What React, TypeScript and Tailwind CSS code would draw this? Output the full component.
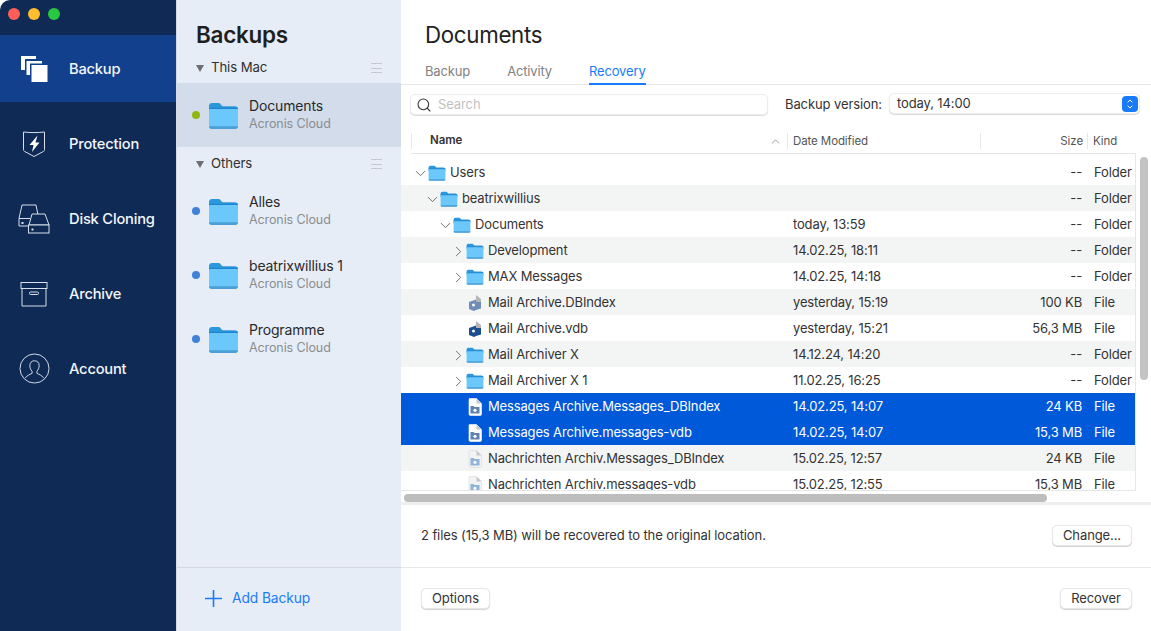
import { ChevronDown, ChevronRight, ChevronUp, Search } from 'lucide-react'

const font = { fontFamily: 'Inter, "Liberation Sans", sans-serif' }

function FolderIcon({ className = 'w-[18px] h-[16px]' }: { className?: string }) {
  return (
    <svg viewBox="0 0 30 26" className={className}>
      <path d="M1 4a3 3 0 0 1 3-3h7l3 3h12a3 3 0 0 1 3 3v3H1z" fill="#2c97dd" />
      <path d="M1 6.500h28v16.500a2.500 2.500 0 0 1-2.500 2.500h-23A2.500 2.500 0 0 1 1 23z" fill="#6cc8fb" />
      <rect x="1" y="5.500" width="28" height="1.200" fill="#1f86cf" />
      <path d="M1 23.500h28a2.500 2.500 0 0 1-2.500 2.500h-23A2.500 2.500 0 0 1 1 23.500z" fill="#4a9fd6" />
    </svg>
  )
}

function DbIcon({ dark }: { dark: boolean }) {
  const c = dark ? '#1c4f8f' : '#6f8db5'
  return (
    <svg viewBox="0 0 16 18" className="w-4 h-[18px]">
      <path d="M9 1l5 4v3H9z" fill="#b5b5b8" />
      <path d="M2 8l7-2.500V16l-2 1-5-2z" fill={c} />
      <path d="M9 8h5v6.500L9 16z" fill={c} />
      <circle cx="6.500" cy="11" r="1.500" fill="#fff" />
    </svg>
  )
}

function MsgIcon({ faded, selected }: { faded?: boolean; selected?: boolean }) {
  return (
    <svg viewBox="0 0 16 18" className="w-4 h-[18px]">
      <path d="M2.500 0.500h7l5 5v10.500a1.500 1.500 0 0 1-1.500 1.500h-9A1.500 1.500 0 0 1 2 16V1z" fill={faded ? '#f1f3f5' : '#fff'} stroke={selected ? '#fff' : '#d5d7da'} strokeWidth="0.600" />
      <path d="M9.500 0.500v5h5z" fill="#c4c7cc" />
      <path d="M3.500 8h3l1 1h5v6.500h-9z" fill={faded ? '#8fb2d9' : '#5f83ad'} />
      <circle cx="8" cy="12.300" r="1.600" fill="#fff" />
    </svg>
  )
}

function BackupIcon() {
  return (
    <svg viewBox="0 0 28 28" className="w-7 h-7">
      <path d="M1 1h15v3H5v11H1z" fill="#fff" />
      <path d="M6.500 6H22v2.500H10V20H6.500z" fill="#fff" />
      <rect x="11.500" y="10" width="16" height="17" fill="#fff" />
    </svg>
  )
}

function ProtectionIcon() {
  return (
    <svg viewBox="0 0 24 28" className="w-6 h-7" fill="none">
      <path d="M1.500 2c7 .8 14 .8 21 0v17.500c0 1-.3 1.600-1.200 2L12 26.500l-9.300-5c-.9-.4-1.200-1-1.200-2z" stroke="#d8dfea" strokeWidth="1" />
      <path d="M15.500 5.500L7.500 15h4l-1.500 7 7.500-9.500h-4z" fill="#fff" />
    </svg>
  )
}

function CloningIcon() {
  return (
    <svg viewBox="0 0 32 30" className="w-8 h-[30px]" fill="none" stroke="#d8dfea" strokeWidth="1">
      <path d="M4 1h14l2 10M1 14.500L4 1M1 14.500V22h10M1 14.500h11" />
      <path d="M14 10h13l4 11H11z" fill="#0e2a55" />
      <rect x="10.500" y="21" width="20.500" height="8" fill="#0e2a55" />
      <rect x="3.500" y="18" width="2" height="2" fill="#d8dfea" stroke="none" />
      <rect x="13.500" y="24.500" width="2" height="2" fill="#d8dfea" stroke="none" />
    </svg>
  )
}

function ArchiveIcon() {
  return (
    <svg viewBox="0 0 28 26" className="w-7 h-[26px]" fill="none" stroke="#d8dfea" strokeWidth="1">
      <rect x="1" y="1.500" width="26" height="6" />
      <path d="M2 7.500V25h24V7.500" />
      <rect x="9.500" y="11" width="9" height="2.500" rx="1" />
    </svg>
  )
}

function AccountIcon() {
  return (
    <svg viewBox="0 0 32 32" className="w-[31px] h-[31px]" fill="none" stroke="#d8dfea" strokeWidth="1">
      <circle cx="16" cy="16" r="15" />
      <path d="M16 8c-3 0-4.800 2-4.800 5 0 2.500 1 4.500 2.300 5.800v2.200c-2.500 1.200-5.500 2.300-7 4.800M16 8c3 0 4.800 2 4.800 5 0 2.500-1 4.500-2.300 5.800v2.200c2.500 1.200 5.500 2.300 7 4.800" />
    </svg>
  )
}

const navItems = [
  { label: 'Backup', icon: <BackupIcon />, active: true },
  { label: 'Protection', icon: <ProtectionIcon /> },
  { label: 'Disk Cloning', icon: <CloningIcon /> },
  { label: 'Archive', icon: <ArchiveIcon /> },
  { label: 'Account', icon: <AccountIcon /> },
]

type Row = {
  name: string
  depth: 0 | 1 | 2 | 3
  arrow?: 'down' | 'right'
  icon: 'folder' | 'db' | 'dbdark' | 'msg' | 'msgfaded'
  date?: string
  size: string
  kind: string
  selected?: boolean
}

const rows: Row[] = [
  { name: 'Users', depth: 0, arrow: 'down', icon: 'folder', size: '--', kind: 'Folder' },
  { name: 'beatrixwillius', depth: 1, arrow: 'down', icon: 'folder', size: '--', kind: 'Folder' },
  { name: 'Documents', depth: 2, arrow: 'down', icon: 'folder', date: 'today, 13:59', size: '--', kind: 'Folder' },
  { name: 'Development', depth: 3, arrow: 'right', icon: 'folder', date: '14.02.25, 18:11', size: '--', kind: 'Folder' },
  { name: 'MAX Messages', depth: 3, arrow: 'right', icon: 'folder', date: '14.02.25, 14:18', size: '--', kind: 'Folder' },
  { name: 'Mail Archive.DBIndex', depth: 3, icon: 'db', date: 'yesterday, 15:19', size: '100 KB', kind: 'File' },
  { name: 'Mail Archive.vdb', depth: 3, icon: 'dbdark', date: 'yesterday, 15:21', size: '56,3 MB', kind: 'File' },
  { name: 'Mail Archiver X', depth: 3, arrow: 'right', icon: 'folder', date: '14.12.24, 14:20', size: '--', kind: 'Folder' },
  { name: 'Mail Archiver X 1', depth: 3, arrow: 'right', icon: 'folder', date: '11.02.25, 16:25', size: '--', kind: 'Folder' },
  { name: 'Messages Archive.Messages_DBIndex', depth: 3, icon: 'msg', date: '14.02.25, 14:07', size: '24 KB', kind: 'File', selected: true },
  { name: 'Messages Archive.messages-vdb', depth: 3, icon: 'msg', date: '14.02.25, 14:07', size: '15,3 MB', kind: 'File', selected: true },
  { name: 'Nachrichten Archiv.Messages_DBIndex', depth: 3, icon: 'msgfaded', date: '15.02.25, 12:57', size: '24 KB', kind: 'File' },
  { name: 'Nachrichten Archiv.messages-vdb', depth: 3, icon: 'msgfaded', date: '15.02.25, 12:55', size: '15,3 MB', kind: 'File' },
]

const depthPad = { 0: 'pl-[13px]', 1: 'pl-[25px]', 2: 'pl-[38px]', 3: 'pl-[51px]' }

function BackupItem({ name, dot, selected }: { name: string; dot: string; selected?: boolean }) {
  return (
    <div className={`h-16 flex items-center pl-[15px] ${selected ? 'bg-[#d3dcea]' : ''}`}>
      <span className={`w-2 h-2 rounded-full ${dot}`} />
      <FolderIcon className="w-[31px] h-[29px] ml-[8px] mt-[1px]" />
      <div className="ml-[10px] -mt-[1px]">
        <div className="text-[14px] leading-[18px] text-[#2a2a2a] tracking-[-0.15px]">{name}</div>
        <div className="text-[12.500px] leading-[18px] text-[#8a8d91] tracking-[-0.1px]">Acronis Cloud</div>
      </div>
    </div>
  )
}

function GroupHeader({ label, className }: { label: string; className: string }) {
  return (
    <div className={`flex items-center pl-[19px] pr-[19px] ${className}`}>
      <span className="w-0 h-0 border-x-[4.500px] border-x-transparent border-t-[7px] border-t-[#6e6e70]" />
      <span className="ml-[7px] text-[13.200px] text-[#303030] tracking-[-0.1px]">{label}</span>
      <span className="ml-auto w-[11px] h-[10px] border-y border-[#c5c8cc] flex items-center">
        <span className="w-full h-px bg-[#c5c8cc]" />
      </span>
    </div>
  )
}

function PushButton({ label, className = '' }: { label: string; className?: string }) {
  return (
    <button className={`h-[21px] bg-white rounded-[5px] border border-[#e6e6e6] shadow-[0_1px_1px_rgba(0,0,0,0.18)] text-[13px] text-[#333] tracking-[-0.1px] ${className}`}>
      {label}
    </button>
  )
}

function TreeRow({ row, striped }: { row: Row; striped: boolean }) {
  const sel = row.selected
  const bg = sel ? 'bg-[#0059d9] text-white' : striped ? 'bg-[#f3f5f5] text-[#333]' : 'bg-white text-[#333]'
  return (
    <div className={`h-[26px] pt-[2px] flex items-center text-[13px] tracking-[-0.15px] ${bg}`}>
      <div className={`w-[392px] flex items-center shrink-0 ${depthPad[row.depth]}`}>
        <span className="w-[13px] flex justify-center shrink-0">
          {row.arrow === 'down' && <ChevronDown size={17} strokeWidth={1.300} className="text-[#666] shrink-0" />}
          {row.arrow === 'right' && <ChevronRight size={17} strokeWidth={1.300} className="text-[#666] shrink-0" />}
        </span>
        <span className="w-[18px] flex justify-center shrink-0 ml-[1px]">
          {row.icon === 'folder' && <FolderIcon />}
          {row.icon === 'db' && <DbIcon dark={false} />}
          {row.icon === 'dbdark' && <DbIcon dark />}
          {row.icon === 'msg' && <MsgIcon selected={sel} />}
          {row.icon === 'msgfaded' && <MsgIcon faded />}
        </span>
        <span className="ml-[4px] whitespace-nowrap">{row.name}</span>
      </div>
      <div className="w-[289px] flex shrink-0">
        <span>{row.date}</span>
        <span className="ml-auto">{row.size}</span>
      </div>
      <span className="ml-[12px]">{row.kind}</span>
    </div>
  )
}

export default function App() {
  return (
    <div className="w-[1151px] h-[631px] flex overflow-hidden bg-white" style={font}>
      {/* left nav */}
      <div className="w-[176px] shrink-0 bg-[#0e2a55] rounded-tl-[10px] flex flex-col">
        <div className="h-[35px] flex items-start gap-2 pl-[8px] pt-[8px]">
          <span className="w-3 h-3 rounded-full bg-[#fe5f57]" />
          <span className="w-3 h-3 rounded-full bg-[#febc2e]" />
          <span className="w-3 h-3 rounded-full bg-[#28c840]" />
        </div>
        {navItems.map((item, i) => (
          <div
            key={item.label}
            className={`flex items-center shrink-0 ${i === 0 ? 'h-[67px]' : 'h-[75px]'} ${i === 1 ? 'mt-[4px]' : ''} ${item.active ? 'bg-[#12408c]' : ''}`}
          >
            <span className="w-[69px] flex justify-center pr-[1px] shrink-0">{item.icon}</span>
            <span className="pt-[2px] text-[14.700px] font-medium tracking-[-0.2px] text-[#f4f6fa]">{item.label}</span>
          </div>
        ))}
      </div>

      {/* backups column */}
      <div className="w-[225px] shrink-0 bg-[#e7edf6] border-l border-[#d6dbe4] flex flex-col">
        <div className="h-[57px] pl-[19px] pt-[19px] text-[22.500px] leading-[32px] font-semibold tracking-[-0.3px] text-[#1f1f1f]">Backups</div>
        <GroupHeader label="This Mac" className="h-[26px] pb-[4px]" />
        <BackupItem name="Documents" dot="bg-[#8fb80f]" selected />
        <GroupHeader label="Others" className="h-8 pt-[2px]" />
        <BackupItem name="Alles" dot="bg-[#3f80d8]" />
        <BackupItem name="beatrixwillius 1" dot="bg-[#3f80d8]" />
        <BackupItem name="Programme" dot="bg-[#3f80d8]" />
        <div className="mt-auto h-[64px] pb-[3px] border-t border-[#d3d8e2] flex items-center pl-[28px] text-[#1a7bfa]">
          <svg viewBox="0 0 17 17" className="w-[17px] h-[17px]" fill="none" stroke="#1a7bfa" strokeWidth="1.600">
            <path d="M8.500 0v17M0 8.500h17" />
          </svg>
          <span className="ml-[10px] text-[13.800px] tracking-[-0.1px]">Add Backup</span>
        </div>
      </div>

      {/* main */}
      <div className="flex-1 min-w-0 flex flex-col">
        <div className="h-[85px] border-b border-[#e4e6e8] px-[24px] shrink-0">
          <div className="pt-[19px] text-[22.300px] leading-[32px] text-[#222] tracking-[-0.3px]">Documents</div>
          <div className="flex gap-[37px] mt-[8px] text-[13px] tracking-[-0.15px] text-[#7f8184]">
            <span className="h-[26px] leading-[24px]">Backup</span>
            <span className="h-[26px] leading-[24px]">Activity</span>
            <span className="h-[26px] leading-[24px] text-[#1a7bfa] border-b-[2px] border-[#1a7bfa]">Recovery</span>
          </div>
        </div>

        <div className="h-[45px] flex items-start pt-[8px] pl-[9px] pr-[11px] shrink-0 text-[13px] tracking-[-0.1px]">
          <div className="w-[358px] h-[21px] mt-[1px] bg-white rounded-[5px] border border-[#ececec] shadow-[0_1px_1px_rgba(0,0,0,0.14)] flex items-center pl-[5px]">
            <Search size={16} strokeWidth={1.600} className="text-[#333]" />
            <span className="ml-[6px] text-[#c2c2c2]">Search</span>
          </div>
          <span className="ml-[17px] leading-[22px] text-[#333]">Backup version:</span>
          <div className="ml-[7px] flex-1 h-[21px] bg-white rounded-[5px] border border-[#ececec] shadow-[0_1px_1px_rgba(0,0,0,0.16)] flex items-center pl-[7px] pr-[1px] text-[#333]">
            <span>today, 14:00</span>
            <span className="ml-auto w-4 h-4 rounded-[4px] bg-[#1a7bfa] flex flex-col items-center justify-center text-white">
              <ChevronUp size={8} strokeWidth={3} className="-mb-[1px]" />
              <ChevronDown size={8} strokeWidth={3} className="-mt-[1px]" />
            </span>
          </div>
        </div>

        {/* table header */}
        <div className="h-[24px] pb-[1px] ml-[10px] mr-[15px] flex items-center text-[11.500px] tracking-[-0.1px] text-[#555] border-b border-[#e2e4e6] shrink-0">
          <span className="w-[19px] h-[16px] border-l border-[#e6e6e6]" />
          <span className="font-semibold text-[#333]">Name</span>
          <ChevronUp size={13} strokeWidth={1.500} className="ml-auto mr-[5px] text-[#888]" />
          <span className="w-[349px] shrink-0 flex items-center">
            <span className="w-[193px] h-[16px] border-l border-[#e6e6e6] pl-[5px] leading-[16px]">Date Modified</span>
            <span className="flex-1 h-[16px] border-l border-[#e6e6e6] text-right pr-[4px] leading-[16px]">Size</span>
            <span className="w-[49px] h-[16px] border-l border-[#e6e6e6] pl-[5px] leading-[16px]">Kind</span>
          </span>
        </div>

        <div className="relative h-[351px] shrink-0 border-b-[3px] border-[#eeeeee]">
          <div className="h-[337px] overflow-hidden pt-[5px] mr-[15px] border-r border-b border-[#e6e6e6]">
            {rows.map((row, i) => (
              <TreeRow key={row.name} row={row} striped={i % 2 === 1} />
            ))}
          </div>
          {/* scrollbars */}
          <div className="h-[14px] flex items-center pl-[3px]">
            <div className="w-[643px] h-[8px] rounded-full bg-[#bdbdbd]" />
          </div>
          <div className="absolute right-[3px] top-[3px] w-[8px] h-[223px] rounded-full bg-[#c4c4c4]" />
        </div>

        <div className="flex-1 flex items-center justify-between pb-[1px] pl-[20px] pr-[19px] text-[13px] tracking-[-0.1px] text-[#333]">
          <span>2 files (15,3 MB) will be recovered to the original location.</span>
          <PushButton label="Change..." className="w-[80px]" />
        </div>

        <div className="h-[64px] pb-[3px] shrink-0 border-t border-[#e6e8ea] flex items-center justify-between pl-[20px] pr-[19px]">
          <PushButton label="Options" className="w-[69px]" />
          <PushButton label="Recover" className="w-[72px]" />
        </div>
      </div>
    </div>
  )
}
